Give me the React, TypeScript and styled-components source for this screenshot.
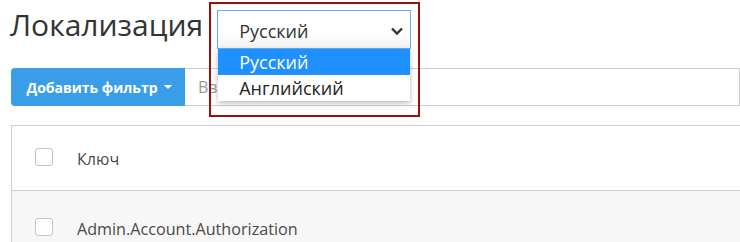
import React from "react";
import styled, { createGlobalStyle } from "styled-components";

const Global = createGlobalStyle`
  html, body { margin: 0; padding: 0; background: #fff; }
  body { font-family: "Open Sans", "Liberation Sans", sans-serif; color: #333; overflow: hidden; }
`;

const Page = styled.div`
  width: 740px;
  height: 242px;
  padding-left: 11px;
  box-sizing: border-box;
  overflow: hidden;
`;

const Header = styled.div`
  display: flex;
  align-items: flex-start;
  height: 68px;
`;

const Title = styled.h1`
  margin: 5px 0 0 -1px;
  font-size: 30px;
  font-weight: 400;
  line-height: 40px;
  color: #333;
`;

const SelectWrap = styled.div`
  position: relative;
  margin-left: 14px;
  margin-top: 10px;
`;

const Frame = styled.div`
  position: absolute;
  left: -8px;
  top: -8px;
  width: 211px;
  height: 115px;
  border: 2px solid #9c0f0f;
  box-sizing: border-box;
  pointer-events: none;
  z-index: 3;
`;

const SelectBox = styled.div`
  width: 194px;
  height: 39px;
  box-sizing: border-box;
  border: 1px solid #66afe9;
  background: linear-gradient(#ffffff 55%, #f2f2f2);
  display: flex;
  align-items: center;
  justify-content: space-between;
  padding: 2px 6px 0 21px;
  font-size: 18px;
  color: #333;
`;

const Menu = styled.ul`
  position: absolute;
  left: 1px;
  top: 39px;
  width: 192px;
  margin: 0;
  padding: 0;
  list-style: none;
  background: #fff;
  box-shadow: 0 2px 5px rgba(0, 0, 0, 0.28);
  z-index: 2;
`;

const Option = styled.li<{ $active?: boolean }>`
  height: 26px;
  line-height: 26px;
  padding-left: 21px;
  font-size: 18px;
  background: ${(p) => (p.$active ? "#1e90ff" : "#fff")};
  color: ${(p) => (p.$active ? "#fff" : "#222")};
`;

const FilterRow = styled.div`
  display: flex;
  height: 38px;
`;

const AddButton = styled.button`
  width: 174px;
  height: 38px;
  border: none;
  border-radius: 4px 0 0 4px;
  background: #3a9de8;
  color: #fff;
  font-family: "Open Sans", sans-serif;
  font-weight: 700;
  font-size: 14px;
  display: flex;
  align-items: center;
  justify-content: center;
  gap: 6px;
  padding: 0 0 0 2px;
`;

const Caret = styled.span`
  width: 0;
  height: 0;
  border-left: 4.5px solid transparent;
  border-right: 4.5px solid transparent;
  border-top: 4.5px solid #fff;
`;

const SearchInput = styled.div`
  flex: 1;
  height: 38px;
  box-sizing: border-box;
  border: 1px solid #ccc;
  border-left: none;
  font-size: 16px;
  color: #999;
  padding-left: 13px;
  display: flex;
  align-items: center;
`;

const Table = styled.div`
  margin-top: 19px;
  border-top: 1px solid #cfcfcf;
  border-left: 1px solid #cfcfcf;
`;

const Row = styled.div<{ $shaded?: boolean }>`
  height: ${(p) => (p.$shaded ? "74px" : "64px")};
  display: flex;
  align-items: center;
  padding-left: 23px;
  gap: 24px;
  background: ${(p) => (p.$shaded ? "#f7f7f7" : "#fff")};
  border-bottom: 1px solid #cfcfcf;
  font-size: 17px;
  color: #4a4a4a;
`;

const Check = styled.span`
  width: 18px;
  height: 18px;
  margin-top: -3px;
  box-sizing: border-box;
  border: 1px solid #c4c4c4;
  border-radius: 3px;
  background: #fff;
`;

const Cell = styled.span`
  font-family: "Open Sans", sans-serif;
  transform: scaleX(0.95);
  transform-origin: left center;
  display: inline-block;
  white-space: nowrap;
`;

const Chevron = () => (
  <svg width="14" height="10" viewBox="0 0 14 10">
    <path d="M2 2.5 L7 7.5 L12 2.5" fill="none" stroke="#333" strokeWidth="2.4" />
  </svg>
);

export default function App() {
  return (
    <Page>
      <Global />
      <Header>
        <Title>Локализация</Title>
        <SelectWrap>
          <Frame />
          <SelectBox>
            <span>Русский</span>
            <Chevron />
          </SelectBox>
          <Menu>
            <Option $active>Русский</Option>
            <Option>Английский</Option>
          </Menu>
        </SelectWrap>
      </Header>
      <FilterRow>
        <AddButton>
          Добавить фильтр <Caret />
        </AddButton>
        <SearchInput>Введите ключ</SearchInput>
      </FilterRow>
      <Table>
        <Row>
          <Check />
          <Cell>Ключ</Cell>
        </Row>
        <Row $shaded>
          <Check />
          <Cell>Admin.Account.Authorization</Cell>
        </Row>
      </Table>
    </Page>
  );
}
